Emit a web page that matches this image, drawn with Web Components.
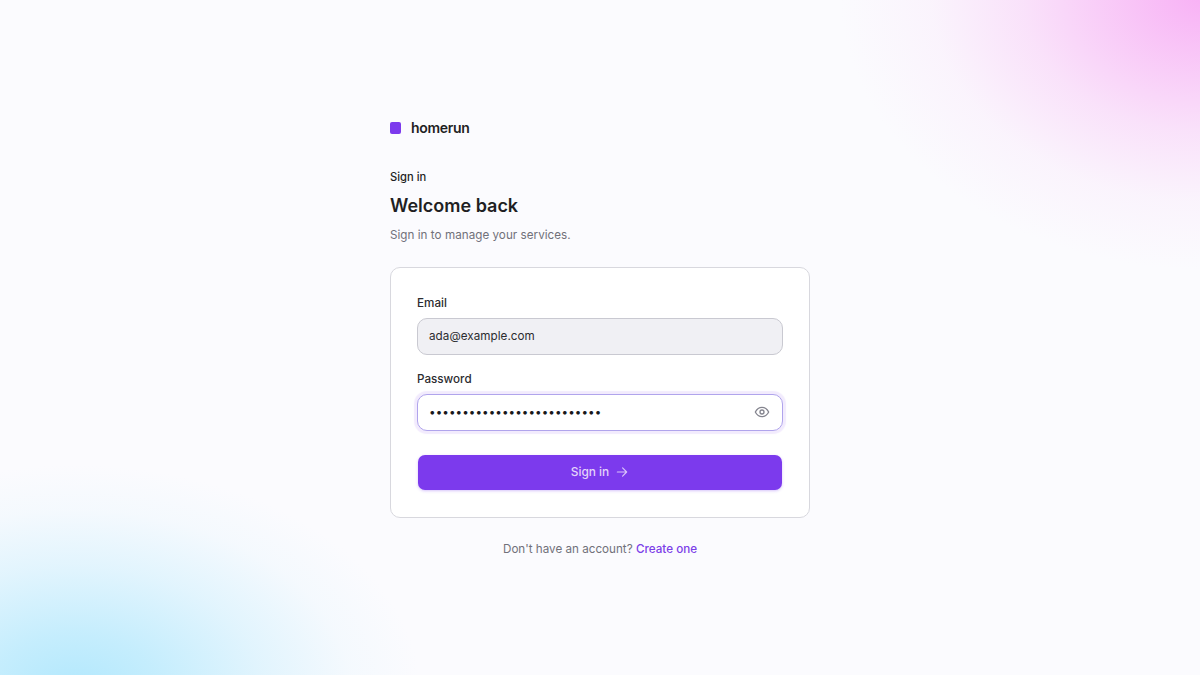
<!DOCTYPE html>
<html lang="en">
<head>
<meta charset="utf-8">
<title>homerun</title>
<style>
  html, body { margin: 0; height: 100%; }
  body { font-family: Inter, "Liberation Sans", sans-serif; }
  login-page a { color: #7c40e8; font-weight: 500; text-decoration: none; }
</style>
</head>
<body>
<login-page>
  <brand-mark slot="brand">homerun</brand-mark>
  <page-heading slot="heading" eyebrow="Sign in" title="Welcome back" sub="Sign in to manage your services."></page-heading>
  <login-card slot="card">
    <text-field label="Email" value="ada@example.com" filled></text-field>
    <text-field label="Password" value="••••••••••••••••••••••••••" focused secret></text-field>
    <submit-button>Sign in</submit-button>
  </login-card>
  <span slot="foot">Don't have an account? <a href="#">Create one</a></span>
</login-page>

<script>
class loginPage extends HTMLElement {
    connectedCallback() {
        const shadowRoot = this.attachShadow({mode: 'open'});
        shadowRoot.innerHTML = `<style>
        :host{
            display: flex;
            flex-direction: column;
            align-items: center;
            justify-content: center;
            width: 1200px;
            height: 675px;
            overflow: hidden;
            background:
              radial-gradient(ellipse 365px 275px at 1205px -5px, rgba(248,176,245,1) 0%, rgba(248,190,246,.82) 25%, rgba(248,205,247,.55) 50%, rgba(249,225,249,.28) 75%, rgba(251,251,254,0) 100%),
              radial-gradient(ellipse 345px 225px at 75px 690px, rgba(178,232,253,1) 0%, rgba(188,235,253,.85) 25%, rgba(205,239,253,.55) 55%, rgba(225,244,253,.25) 80%, rgba(251,251,254,0) 100%),
              #fbfbfe;
        }
        .col{
            width: 420px;
            display: flex;
            flex-direction: column;
        }
        .foot{
            margin-top: 23px;
            text-align: center;
            font-size: 11.67px;
            line-height: 16px;
            color: #71717a;
        }
        </style>
        <div class="col">
            <slot name="brand"></slot>
            <slot name="heading"></slot>
            <slot name="card"></slot>
            <div class="foot"><slot name="foot"></slot></div>
        </div>`;
    }
}
customElements.define('login-page', loginPage);

class brandMark extends HTMLElement {
    connectedCallback() {
        const shadowRoot = this.attachShadow({mode: 'open'});
        shadowRoot.innerHTML = `<style>
        :host{
            display: flex;
            align-items: center;
            gap: 10px;
            height: 18px;
            font-size: 14px;
            font-weight: 600;
            letter-spacing: -0.3px;
            color: #1f1f23;
        }
        i{
            width: 11px;
            height: 12px;
            border-radius: 2px;
            background: #7c3aed;
        }
        </style><i></i><slot></slot>`;
    }
}
customElements.define('brand-mark', brandMark);

class pageHeading extends HTMLElement {
    connectedCallback() {
        const shadowRoot = this.attachShadow({mode: 'open'});
        shadowRoot.innerHTML = `<style>
        :host{
            display: block;
            margin: 32px 0 23px;
            color: #1f1f23;
        }
        .eyebrow{ font-size: 11.2px; font-weight: 500; line-height: 16px; }
        h1{ margin: 7px 0 0; font-size: 18px; font-weight: 600; line-height: 28px; }
        p{ margin: 6px 0 0; font-size: 11.67px; line-height: 18px; letter-spacing: 0.03px; color: #71717a; }
        </style>
        <div class="eyebrow">${this.getAttribute('eyebrow')}</div>
        <h1>${this.getAttribute('title')}</h1>
        <p>${this.getAttribute('sub')}</p>`;
    }
}
customElements.define('page-heading', pageHeading);

class loginCard extends HTMLElement {
    connectedCallback() {
        const shadowRoot = this.attachShadow({mode: 'open'});
        shadowRoot.innerHTML = `<style>
        :host{
            display: flex;
            flex-direction: column;
            gap: 15px;
            box-sizing: border-box;
            padding: 26px 26px 27px;
            background: #fff;
            border: 1px solid #d8d8de;
            border-radius: 10px;
        }
        </style><slot></slot>`;
    }
}
customElements.define('login-card', loginCard);

class textField extends HTMLElement {
    connectedCallback() {
        const eye = `<svg width="16" height="16" viewBox="0 0 24 24" fill="none" stroke="#85858f" stroke-width="2" stroke-linecap="round" stroke-linejoin="round"><path d="M2 12s3.6-7 10-7 10 7 10 7-3.6 7-10 7-10-7-10-7z"/><circle cx="12" cy="12" r="3"/></svg>`;
        const shadowRoot = this.attachShadow({mode: 'open'});
        shadowRoot.innerHTML = `<style>
        :host{ display: block; }
        label{
            display: block;
            padding-top: 1px;
            margin-bottom: 7px;
            font-size: 11.67px;
            font-weight: 500;
            line-height: 16px;
            color: #2c2c30;
        }
        .box{
            display: flex;
            align-items: center;
            justify-content: space-between;
            box-sizing: border-box;
            height: 37px;
            padding: 0 12px 0 11px;
            border: 1px solid #c9c9d1;
            border-radius: 10px;
            font-size: 11.67px;
            letter-spacing: 0.05px;
            color: #2c2c30;
            background: #fff;
        }
        :host([filled]) .box{ background: #f0f0f4; }
        :host([focused]) .box{
            border-color: #b0a4ec;
            box-shadow: 0 0 1px 3px rgba(124,58,237,.10);
        }
        :host([secret]) .val{ color: #18181b; letter-spacing: 0.07px; }
        svg{ display: block; }
        </style>
        <label>${this.getAttribute('label')}</label>
        <div class="box"><span class="val">${this.getAttribute('value')}</span>${this.hasAttribute('secret') ? eye : ''}</div>`;
    }
}
customElements.define('text-field', textField);

class submitButton extends HTMLElement {
    connectedCallback() {
        const shadowRoot = this.attachShadow({mode: 'open'});
        shadowRoot.innerHTML = `<style>
        :host{
            display: flex;
            align-items: center;
            justify-content: center;
            gap: 6px;
            box-sizing: border-box;
            margin: 9px 1px 0;
            height: 35px;
            padding-bottom: 2px;
            border-radius: 7px;
            background: #7c3aed;
            box-shadow: 0 1px 3px rgba(124,58,237,.3);
            color: #e3d3fa;
            font-size: 11.9px;
            font-weight: 500;
        }
        svg{ display: block; margin-top: 2px; }
        </style><slot></slot>
        <svg width="14" height="14" viewBox="0 0 24 24" fill="none" stroke="#d9c4f9" stroke-width="2" stroke-linecap="round" stroke-linejoin="round"><path d="M4 12h16M13 5l7 7-7 7"/></svg>`;
    }
}
customElements.define('submit-button', submitButton);
</script>
</body>
</html>
